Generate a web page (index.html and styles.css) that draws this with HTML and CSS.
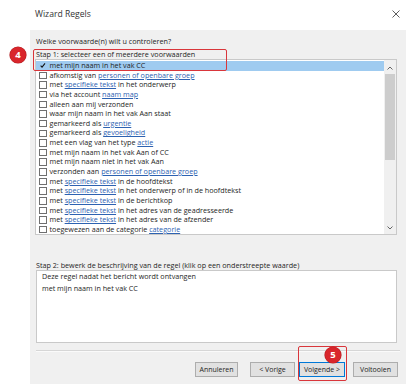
FILE: index.html
```html
<!DOCTYPE html>
<html>
<head>
<meta charset="utf-8">
<link rel="stylesheet" href="styles.css">
</head>
<body>
<div class="window">
  <div class="titlebar">
    <span class="title">Wizard Regels</span>
    <svg class="close" width="8" height="8" viewBox="0 0 8 8"><path d="M0.5 0.5L7.5 7.5M7.5 0.5L0.5 7.5" stroke="#333" stroke-width="0.8" fill="none"/></svg>
  </div>
  <div class="dialog">
    <div class="label q">Welke voorwaarde(n) wilt u controleren?</div>
    <div class="label step1">Stap 1: selecteer een of meerdere voorwaarden</div>
    <div class="listbox">
      <div class="list">
        <div class="row sel"><span class="cb checked"><svg width="7" height="7" viewBox="0 0 7 7"><path d="M0.8 3.6L2.6 5.6L6.4 0.8" stroke="#111" stroke-width="1.3" fill="none"/></svg></span>met mijn naam in het vak CC</div>
        <div class="row"><span class="cb"></span>afkomstig van&nbsp;<span class="lnk">personen of openbare groep</span></div>
        <div class="row"><span class="cb"></span>met&nbsp;<span class="lnk">specifieke tekst</span>&nbsp;in het onderwerp</div>
        <div class="row"><span class="cb"></span>via het account&nbsp;<span class="lnk">naam map</span></div>
        <div class="row"><span class="cb"></span>alleen aan mij verzonden</div>
        <div class="row"><span class="cb"></span>waar mijn naam in het vak Aan staat</div>
        <div class="row"><span class="cb"></span>gemarkeerd als&nbsp;<span class="lnk">urgentie</span></div>
        <div class="row"><span class="cb"></span>gemarkeerd als&nbsp;<span class="lnk">gevoeligheid</span></div>
        <div class="row"><span class="cb"></span>met een vlag van het type&nbsp;<span class="lnk">actie</span></div>
        <div class="row"><span class="cb"></span>met mijn naam in het vak Aan of CC</div>
        <div class="row"><span class="cb"></span>met mijn naam niet in het vak Aan</div>
        <div class="row"><span class="cb"></span>verzonden aan&nbsp;<span class="lnk">personen of openbare groep</span></div>
        <div class="row"><span class="cb"></span>met&nbsp;<span class="lnk">specifieke tekst</span>&nbsp;in de hoofdtekst</div>
        <div class="row"><span class="cb"></span>met&nbsp;<span class="lnk">specifieke tekst</span>&nbsp;in het onderwerp of in de hoofdtekst</div>
        <div class="row"><span class="cb"></span>met&nbsp;<span class="lnk">specifieke tekst</span>&nbsp;in de berichtkop</div>
        <div class="row"><span class="cb"></span>met&nbsp;<span class="lnk">specifieke tekst</span>&nbsp;in het adres van de geadresseerde</div>
        <div class="row"><span class="cb"></span>met&nbsp;<span class="lnk">specifieke tekst</span>&nbsp;in het adres van de afzender</div>
        <div class="row"><span class="cb"></span>toegewezen aan de categorie&nbsp;<span class="lnk">categorie</span></div>
      </div>
      <div class="scrollbar">
        <svg class="arrow" width="6" height="4" viewBox="0 0 6 4"><path d="M0.5 3.5L3 1L5.5 3.5" stroke="#555" stroke-width="0.9" fill="none"/></svg>
        <div class="track"><div class="thumb"></div></div>
        <svg class="arrow" width="6" height="4" viewBox="0 0 6 4"><path d="M0.5 0.5L3 3L5.5 0.5" stroke="#555" stroke-width="0.9" fill="none"/></svg>
      </div>
    </div>
    <div class="label step2">Stap 2: bewerk de beschrijving van de regel (klik op een onderstreepte waarde)</div>
    <div class="desc">
      <div>Deze regel nadat het bericht wordt ontvangen</div>
      <div>met mijn naam in het vak CC</div>
    </div>
    <div class="sep"></div>
    <div class="buttons">
      <div class="btn b-cancel">Annuleren</div>
      <div class="btn b-prev">&lt; Vorige</div>
      <div class="btn b-next">Volgende &gt;</div>
      <div class="btn b-finish">Voltooien</div>
    </div>
  </div>
  <div class="hl hl1"></div>
  <div class="badge badge4">4</div>
  <div class="hl hl2"></div>
  <div class="badge badge5">5</div>
</div>
</body>
</html>
```

FILE: styles.css
```css
* { box-sizing: border-box; }
html, body {
  margin: 0;
  padding: 0;
  background: #ffffff;
}
body {
  width: 406px;
  height: 384px;
  overflow: hidden;
  font-family: "Open Sans", "Noto Sans", sans-serif;
  color: #222;
}
.window {
  position: relative;
  width: 406px;
  height: 384px;
}
.titlebar {
  height: 30px;
  display: flex;
  align-items: center;
  justify-content: space-between;
  padding: 0 6px 2px 35px;
}
.title {
  font-size: 8.6px;
  color: #333;
}
.close {
  display: block;
  margin-top: -1px;
}
.dialog {
  margin-left: 30px;
  height: 354px;
  background: #f0f0f0;
  padding: 6px 9px 0 5px;
  display: flex;
  flex-direction: column;
}
.label {
  font-size: 7.2px;
  line-height: 10px;
  padding-left: 1px;
  white-space: nowrap;
  color: #1e1e1e;
}
.step1 {
  margin-top: 3px;
  margin-bottom: 0;
}
.listbox {
  height: 176px;
  border: 1px solid #c9c9c9;
  background: #fff;
  display: flex;
  overflow: hidden;
}
.list {
  flex: 1;
  padding-top: 1px;
  overflow: hidden;
}
.row {
  height: 9.65px;
  line-height: 9.65px;
  font-size: 7.2px;
  display: flex;
  align-items: center;
  white-space: nowrap;
  padding-left: 3px;
  color: #1e1e1e;
}
.row.sel {
  background: #9fcbf0;
}
.cb {
  width: 7.5px;
  height: 7.5px;
  border: 1px solid #6f6f6f;
  background: #fff;
  margin-right: 3px;
  flex: none;
  display: flex;
  align-items: center;
  justify-content: center;
}
.cb.checked {
  border-color: #9fcbf0;
  background: transparent;
}
.cb svg { display: block; }
.lnk {
  color: #2d62b1;
  text-decoration: underline;
  text-underline-offset: 1px;
  text-decoration-thickness: 0.6px;
}
.scrollbar {
  width: 12px;
  flex: none;
  background: #f0f0f0;
  display: flex;
  flex-direction: column;
  align-items: center;
  padding: 6px 0 4px;
}
.arrow { display: block; flex: none; }
.track {
  flex: 1;
  width: 100%;
  padding: 4px 1px;
}
.thumb {
  height: 86px;
  background: #cdcdcd;
}
.step2 {
  margin-top: 25px;
}
.desc {
  height: 73px;
  border: 1px solid #c9c9c9;
  background: #fff;
  margin-left: 1px;
  padding: 0 5px;
  font-size: 7.2px;
  line-height: 11.5px;
  color: #1e1e1e;
}
.sep {
  margin-top: 7px;
  margin-left: 1px;
  margin-right: -3px;
  height: 2px;
  border-top: 1px solid #d6d6d6;
  border-bottom: 1px solid #fafafa;
}
.buttons {
  margin-top: 10px;
  margin-right: -1px;
  display: flex;
  justify-content: flex-end;
}
.btn {
  height: 15px;
  width: 45px;
  background: #e1e1e1;
  border: 1px solid #adadad;
  font-size: 7px;
  line-height: 13px;
  text-align: center;
  color: #1e1e1e;
  white-space: nowrap;
}
.b-cancel { width: 43px; margin-right: 12px; }
.b-prev { margin-right: 4px; }
.b-next { width: 46px; border-color: #0078d7; margin-right: 8px; }
.hl {
  position: absolute;
  border: 1.5px solid #d9363b;
  border-radius: 2px;
}
.hl1 { left: 33px; top: 49px; width: 194px; height: 22px; }
.hl2 { left: 298px; top: 346px; width: 49px; height: 35px; }
.badge {
  position: absolute;
  width: 16px;
  height: 16px;
  border-radius: 50%;
  background: #d9262c;
  box-shadow: 0 0 0 0.6px #b01e22;
  color: #fff;
  font-family: "Open Sans", sans-serif;
  font-weight: 700;
  font-size: 9.5px;
  line-height: 16px;
  text-align: center;
}
.badge4 { left: 10px; top: 47px; }
.badge5 { left: 325px; top: 347px; }
```
